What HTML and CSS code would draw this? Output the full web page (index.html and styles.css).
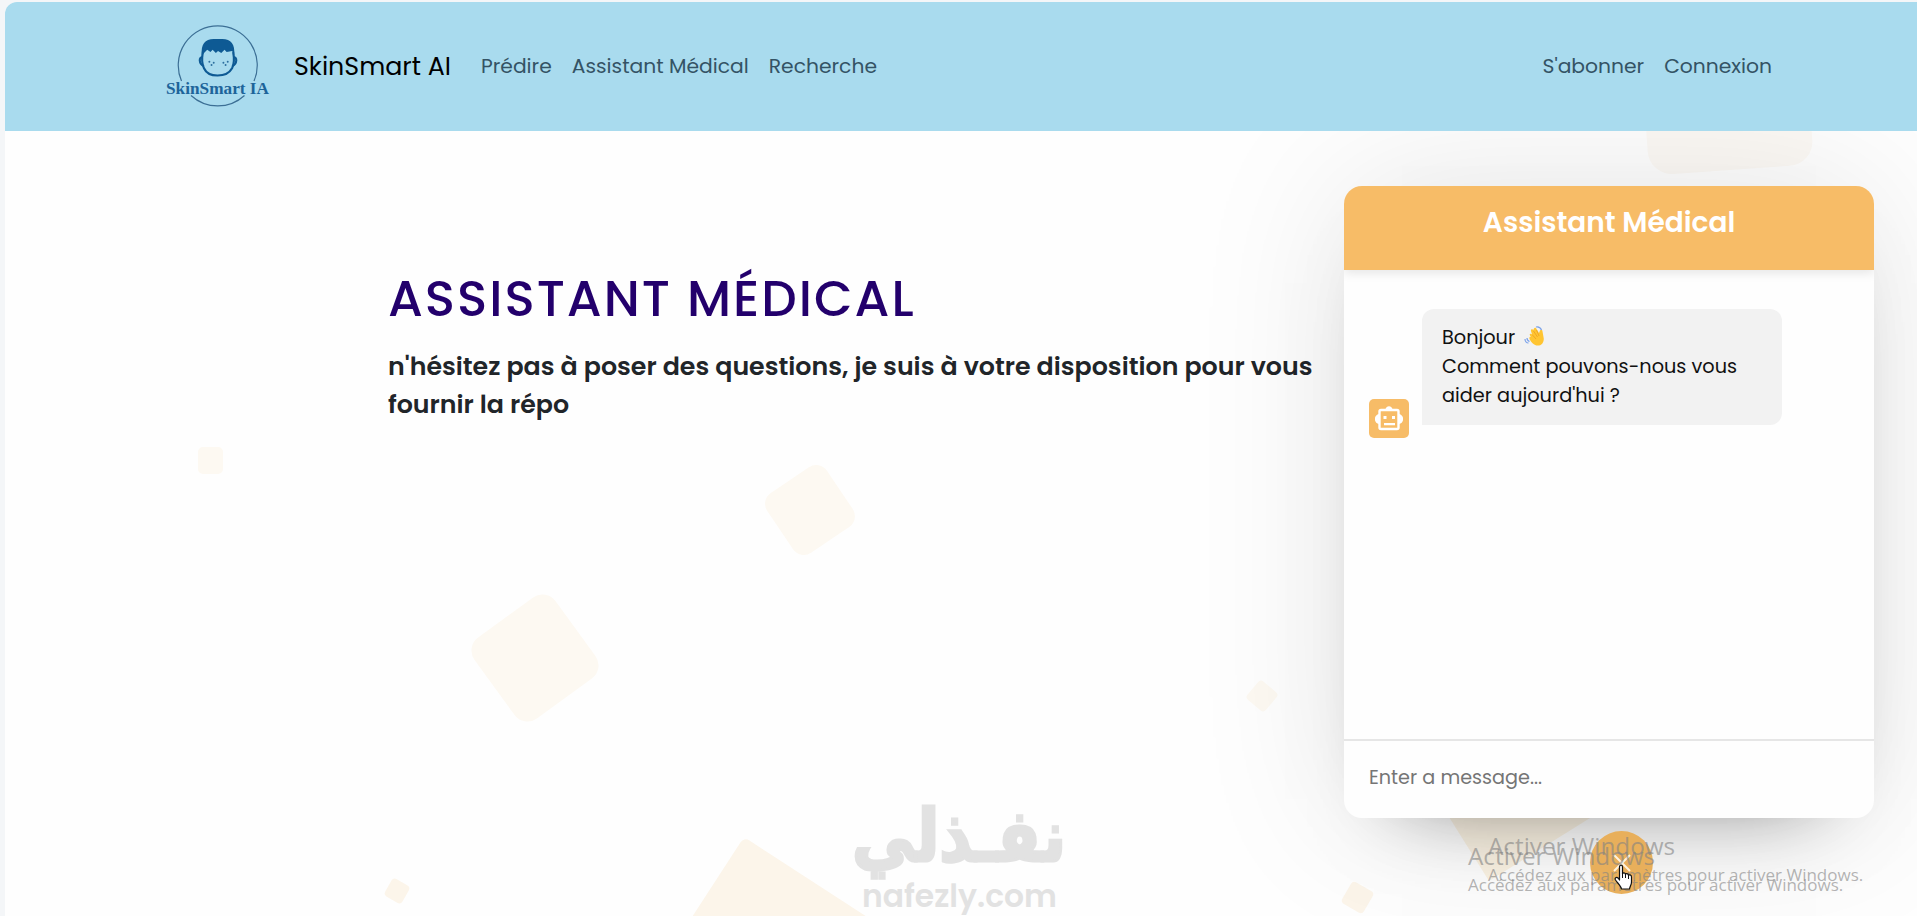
FILE: index.html
```html
<!DOCTYPE html>
<html lang="fr">
<head>
    <meta charset="UTF-8">
    <meta name="viewport" content="width=device-width, initial-scale=1.0">
    <title>SkinSmart AI - Assistant Médical</title>
    <link rel="stylesheet" href="styles.css">
</head>
<body>
    <div class="page">
        <nav class="navbar">
            <a class="logo" href="#">
                <svg width="108" height="84" viewBox="0 0 108 84">
                    <g fill="none" stroke="#3c6f95" stroke-width="1.2">
                        <path d="M17.500 56A39.500 39.500 0 1 1 90 56"/>
                        <path d="M27 70.500A39.500 39.500 0 0 0 80.500 70.500"/>
                    </g>
                    <g transform="translate(-4.300 0) scale(1.080)">
                        <g fill="none" stroke="#0e5a94" stroke-width="2">
                            <path d="M40 25C39 30 39 36 41 40C45 49 62 49 67 40C69 36 69 30 68 25"/>
                            <path d="M40 30C36 29 36 36 41 38M68 30C72 29 72 36 67 38"/>
                        </g>
                        <path fill="#0e5a94" d="M39 28C38 18 42 13 50 13H58C66 13 70 18 69 28L67 24L62 25L60 23L57 26L54 24L52 26L49 23L47 25L44 23Z"/>
                        <g fill="#2d6f9f">
                            <circle cx="46" cy="34" r=".9"/><circle cx="50" cy="35" r=".9"/><circle cx="48" cy="37" r=".9"/>
                            <circle cx="59" cy="35" r=".9"/><circle cx="63" cy="34" r=".9"/><circle cx="61" cy="37" r=".9"/>
                        </g>
                    </g>
                    <text class="logo-text" x="2" y="69" textLength="103" lengthAdjust="spacingAndGlyphs">SkinSmart IA</text>
                </svg>
            </a>
            <a class="brand" href="#">SkinSmart AI</a>
            <div class="nav-links">
                <a href="#">Prédire</a>
                <a href="#">Assistant Médical</a>
                <a href="#">Recherche</a>
            </div>
            <div class="nav-links nav-right">
                <a href="#">S'abonner</a>
                <a href="#">Connexion</a>
            </div>
        </nav>

        <main class="hero">
            <h1>ASSISTANT MÉDICAL</h1>
            <p>n'hésitez pas à poser des questions, je suis à votre disposition pour vous<br>fournir la répo</p>
        </main>

        <!-- floating squares -->
        <div class="squares">
            <i class="sq sq1"></i>
            <i class="sq sq2"></i>
            <i class="sq sq3"></i>
            <i class="sq sq4"></i>
            <i class="sq sq5"></i>
            <i class="sq sq6"></i>
            <i class="sq sq7"></i>
            <i class="sq sq8"></i>
            <i class="sq sq9"></i>
        </div>

        <section class="chatbot">
            <header><h2>Assistant Médical</h2></header>
            <div class="chatbox">
                <span class="robot">
                    <svg width="28" height="28" viewBox="0 0 28 28">
                        <rect x="4.500" y="5" width="19" height="19" rx="1.500" fill="none" stroke="#fff" stroke-width="2.400"/>
                        <path fill="#fff" d="M10.500 5C10.500 0 17.500 0 17.500 5ZM4 9V19C-1.500 18 -1.500 10 4 9ZM24 9V19C29.500 18 29.500 10 24 9Z"/>
                        <path fill="#fff" d="M8.500 11H11.500V14H8.500ZM17 11H20V14H17ZM9 18H20V20.300H9Z"/>
                    </svg>
                </span>
                <p class="bubble">Bonjour <svg class="wave" width="21" height="21" viewBox="0 0 21 21">
                        <path fill="#ffc532" d="M7 11C4.500 8 6 7 8 8.500L7 5C6.500 3 8.500 2.500 9.300 4L10 2.500C10.500 1.200 12.200 1.500 12.500 3L15 7L16 4.500C17 3 18.500 4 18.500 5.500L19.500 11C20.500 15 18.500 19 15 19.500C10 20 7.500 16.500 5.500 13C5 11 6 10.500 7 11Z"/>
                        <path fill="none" stroke="#eea020" stroke-width=".8" d="M8 8.500L12 13M9.500 5L13.500 11M12.500 4L15 10"/>
                        <path fill="none" stroke="#7ba2ea" stroke-width="1.200" d="M12 1C14.500 .5 16.500 1.500 17.500 4M1 13C1 15 2.500 17 4.500 17M3 12C3 13.500 4 15 5.500 15.500"/>
                    </svg><br>Comment pouvons-nous vous<br>aider aujourd'hui ?</p>
            </div>
            <div class="chat-input">
                <textarea placeholder="Enter a message..." rows="1"></textarea>
            </div>
        </section>

        <button class="toggler" aria-label="Fermer">
            <svg width="20" height="20" viewBox="0 0 20 20"><path d="M2 2L18 18M18 2L2 18" stroke="#fff3df" stroke-width="2"/></svg>
        </button>
    </div>

    <div class="nafezly">
        <svg width="220" height="116" viewBox="0 0 220 116">
            <text class="nafezly-ar" x="216" y="61" direction="rtl" textLength="214" lengthAdjust="spacingAndGlyphs">نفـذلي</text>
            <text class="nafezly-en" x="12" y="107" textLength="195" lengthAdjust="spacingAndGlyphs">nafezly.com</text>
        </svg>
    </div>

    <div class="activate first">
        <strong>Activer Windows</strong>
        <span>Accédez aux paramètres pour activer Windows.</span>
    </div>
    <div class="activate second">
        <strong>Activer Windows</strong>
        <span>Accédez aux paramètres pour activer Windows.</span>
    </div>

    <svg class="cursor" width="20" height="26" viewBox="0 0 20 26">
        <path fill="#fff" stroke="#111" stroke-width="1.200" stroke-linejoin="round" d="M5.500 16V3C5.500 .5 8.500 .5 8.500 3V10C8.500 8.500 11.500 8.500 11.500 10.500C11.500 9 14.500 9.300 14.500 11.500C15 10.300 17.500 10.700 17.500 13V18C17.500 21 16 22 15.500 25H7.500C7 22 3.500 19 1.500 16C.3 14 2.500 12.500 4 14Z"/>
        <path fill="none" stroke="#111" d="M8.500 10V14M11.500 11V14M14.500 12V15"/>
    </svg>
</body>
</html>
```
FILE: styles.css
```css
* {
    box-sizing: border-box;
    margin: 0;
    padding: 0;
}
body {
    height: 100vh;
    overflow: hidden;
    background: #f4f6f8;
    font-family: Poppins, Inter, sans-serif;
    padding: 2px 0 0 5px;
}
.page {
    height: 914px;
    background: #fefefe;
    border-radius: 12px 0 0 0;
    overflow: hidden;
}
a {
    text-decoration: none;
    color: inherit;
}

/* navbar */
.navbar {
    position: relative;
    z-index: 3;
    display: flex;
    align-items: center;
    height: 129px;
    padding: 0 145px 0 159px;
    background: #a9dbee;
}
.logo svg {
    display: block;
}
.logo-text {
    font-family: "Liberation Serif", serif;
    font-size: 17px;
    font-weight: bold;
    fill: #1d649a;
}
.brand {
    margin-left: 22px;
    width: 163px;
    font-size: 25.3px;
    color: #000;
    white-space: nowrap;
}
.nav-links {
    display: flex;
    gap: 20px;
    margin-left: 24px;
    padding-bottom: 2px;
    font-size: 20.3px;
    color: #345365;
    white-space: nowrap;
}
.nav-right {
    margin-left: auto;
}

/* hero */
.hero {
    padding: 136px 0 0 383px;
}
h1 {
    font-size: 50px;
    font-weight: 500;
    line-height: 64px;
    letter-spacing: 2px;
    color: #23006c;
}
.hero p {
    margin-top: 16px;
    font-size: 25.3px;
    font-weight: 600;
    line-height: 38.4px;
    color: #212529;
    white-space: nowrap;
}

/* squares */
.squares {
    position: absolute;
    inset: 0;
    overflow: hidden;
}
.sq {
    position: absolute;
    background: #fdf9f2;
}
.sq1 { left: 198px; top: 447px; width: 25px; height: 27px; border-radius: 5px; }
.sq2 { left: 774px; top: 474px; width: 72px; height: 72px; border-radius: 13px; transform: rotate(-34deg); }
.sq3 { left: 485px; top: 608px; width: 100px; height: 100px; border-radius: 16px; transform: rotate(-36deg); }
.sq4 { left: 1250px; top: 684px; width: 24px; height: 24px; border-radius: 4px; transform: rotate(40deg); }
.sq5 { left: 1345px; top: 885px; width: 25px; height: 25px; border-radius: 4px; transform: rotate(30deg); background: #fcf5ea; }
.sq6 { left: 744px; top: 837px; width: 220px; height: 220px; border-radius: 6px; transform-origin: 0 0; transform: rotate(33deg); background: #fcf5ea; }
.sq7 { left: 387px; top: 881px; width: 20px; height: 20px; border-radius: 4px; transform: rotate(30deg); background: #fcf5ea; }
.sq8 { left: 1450px; top: 745px; width: 130px; height: 110px; transform: rotate(-32deg); background: #fbf3e4; }
.sq9 { left: 1645px; top: 50px; width: 165px; height: 120px; border-radius: 24px; transform: rotate(-4deg); background: #fcf9f5; }

/* chatbot */
.chatbot {
    position: absolute;
    left: 1344px;
    top: 186px;
    z-index: 2;
    width: 530px;
    height: 632px;
    display: flex;
    flex-direction: column;
    background: #fefefe;
    border-radius: 18px;
    overflow: hidden;
    box-shadow: 0 0 156px rgba(0, 0, 0, .1), 0 39px 78px -58px rgba(0, 0, 0, .5);
}
.chatbot header {
    height: 84px;
    padding-top: 18px;
    background: #f7bc67;
    text-align: center;
    box-shadow: 0 3px 10px rgba(0, 0, 0, .1);
}
h2 {
    font-size: 28px;
    font-weight: 600;
    line-height: 37px;
    color: #fff;
}
.chatbox {
    flex: 1;
    display: flex;
    align-items: flex-start;
    padding: 39px 25px 0;
}
.robot {
    display: flex;
    align-items: center;
    justify-content: center;
    width: 40px;
    height: 39px;
    margin-top: 90px;
    background: #f7bc67;
    border-radius: 5px;
}
.bubble {
    width: 360px;
    height: 116px;
    margin-left: 13px;
    padding: 14px 20px;
    border-radius: 12px 12px 12px 0;
    background: #f2f2f2;
    color: #111;
    font-size: 19.3px;
    line-height: 29px;
    white-space: nowrap;
}
.wave {
    margin-left: 4px;
    vertical-align: -3px;
}
.chat-input {
    height: 79px;
    border-top: 2px solid #e6e6e6;
    padding: 23px 25px;
}
textarea {
    display: block;
    width: 100%;
    height: 30px;
    border: none;
    outline: none;
    resize: none;
    background: none;
    font-family: inherit;
    font-size: 19.2px;
    line-height: 28px;
}
textarea::placeholder {
    color: #757575;
}
.toggler {
    position: absolute;
    left: 1590px;
    top: 831px;
    z-index: 2;
    width: 63px;
    height: 63px;
    display: flex;
    align-items: center;
    justify-content: center;
    border: none;
    border-radius: 50%;
    background: #e8af5b;
}

/* overlays */
.nafezly {
    position: absolute;
    left: 850px;
    top: 800px;
}
.nafezly svg {
    display: block;
    overflow: visible;
}
.nafezly text {
    fill: #e2e2e2;
}
.nafezly-ar {
    font-family: "DejaVu Sans", sans-serif;
    font-size: 72px;
    font-weight: bold;
    stroke: #e2e2e2;
    stroke-width: 3px;
}
.nafezly-en {
    font-family: Poppins, Inter, sans-serif;
    font-size: 32px;
    font-weight: 600;
}
.activate {
    position: absolute;
    z-index: 4;
    display: flex;
    flex-direction: column;
    font-family: "Segoe UI", "Open Sans", sans-serif;
    color: rgba(130, 130, 130, .6);
    white-space: nowrap;
}
.activate strong {
    font-size: 24.3px;
    font-weight: 400;
    line-height: 32px;
}
.activate span {
    font-size: 17px;
    line-height: 26px;
}
.first {
    left: 1488px;
    top: 830px;
}
.second {
    left: 1468px;
    top: 840px;
}
.cursor {
    position: absolute;
    left: 1614px;
    top: 864px;
    z-index: 5;
}
```
